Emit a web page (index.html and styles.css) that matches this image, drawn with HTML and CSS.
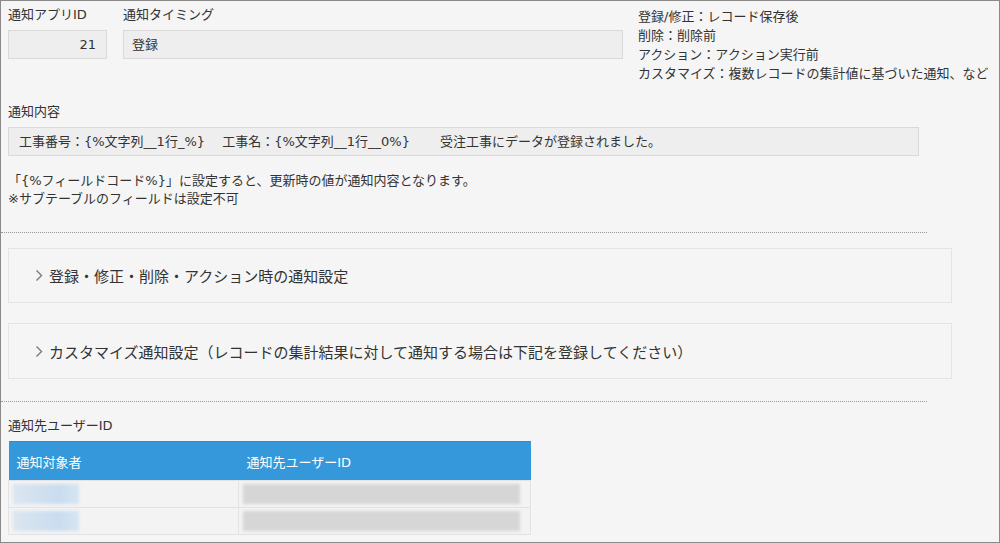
FILE: index.html
```html
<!DOCTYPE html>
<html lang="ja">
<head>
<meta charset="utf-8">
<title>通知設定</title>
<link rel="stylesheet" href="styles.css">
</head>
<body>
<div class="page">
  <div class="top-row">
    <div class="col-id">
      <div class="label">通知アプリID</div>
      <div class="field field-right">21</div>
    </div>
    <div class="col-timing">
      <div class="label">通知タイミング</div>
      <div class="field">登録</div>
    </div>
    <div class="notes">
      <div>登録/修正：レコード保存後</div>
      <div>削除：削除前</div>
      <div>アクション：アクション実行前</div>
      <div>カスタマイズ：複数レコードの集計値に基づいた通知、など</div>
    </div>
  </div>

  <div class="label">通知内容</div>
  <div class="field field-content">工事番号：{%文字列__1行_%}　 工事名：{%文字列__1行__0%}　　 受注工事にデータが登録されました。</div>

  <div class="help">
    <div>「{%フィールドコード%}」に設定すると、更新時の値が通知内容となります。</div>
    <div>※サブテーブルのフィールドは設定不可</div>
  </div>

  <div class="divider"></div>

  <div class="accordion">
    <svg class="chev" width="8" height="13" viewBox="0 0 8 13"><polyline points="1.5,1.5 6.5,6.5 1.5,11.5" fill="none" stroke="#7a7a7a" stroke-width="1.4"/></svg>
    <span>登録・修正・削除・アクション時の通知設定</span>
  </div>
  <div class="accordion acc2">
    <svg class="chev" width="8" height="13" viewBox="0 0 8 13"><polyline points="1.5,1.5 6.5,6.5 1.5,11.5" fill="none" stroke="#7a7a7a" stroke-width="1.4"/></svg>
    <span>カスタマイズ通知設定（レコードの集計結果に対して通知する場合は下記を登録してください）</span>
  </div>

  <div class="divider divider2"></div>

  <div class="label label-users">通知先ユーザーID</div>
  <table class="users">
    <thead>
      <tr><th class="c1">通知対象者</th><th class="c2">通知先ユーザーID</th></tr>
    </thead>
    <tbody>
      <tr><td><div class="blur blur-blue"></div></td><td><div class="blur blur-gray"></div></td></tr>
      <tr><td><div class="blur blur-blue"></div></td><td><div class="blur blur-gray"></div></td></tr>
    </tbody>
  </table>
</div>
</body>
</html>
```

FILE: styles.css
```css
html, body {
  margin: 0;
  padding: 0;
  background: #f5f5f5;
}
.page {
  box-sizing: border-box;
  width: 1000px;
  height: 543px;
  border: 1px solid #8a8a8a;
  padding: 5px 7px 0 7px;
  background: #f5f5f5;
  font-family: "DejaVu Sans", "Noto Sans CJK JP", sans-serif;
  font-size: 13px;
  color: #333;
  overflow: hidden;
}
.top-row {
  display: flex;
  align-items: flex-start;
  margin-bottom: 20px;
}
.col-id { width: 99px; margin-right: 16px; }
.col-timing { width: 500px; margin-right: 15px; }
.label {
  height: 18px;
  line-height: 18px;
  margin-bottom: 6px;
}
.field {
  box-sizing: border-box;
  height: 29px;
  line-height: 27px;
  border: 1px solid #d9d9d9;
  background: #eeeeee;
  padding: 0 8px;
}
.field-right { text-align: right; padding-right: 10px; }
.notes {
  line-height: 19px;
  padding-top: 1px;
  white-space: nowrap;
}
.field-content {
  width: 911px;
  padding-left: 10px;
  white-space: pre;
}
.help {
  margin-top: 16px;
  line-height: 18px;
}
.divider {
  margin: 24px 0 15px -7px;
  width: 926px;
  border-top: 1px dotted #9a9a9a;
}
.accordion {
  box-sizing: border-box;
  width: 944px;
  height: 55px;
  border: 1px solid #e1e5e8;
  display: flex;
  align-items: center;
  padding-left: 26px;
  font-family: "Noto Sans CJK JP", sans-serif;
  font-size: 15px;
  color: #333;
}
.accordion .chev { margin-right: 6px; }
.acc2 { margin-top: 20px; height: 56px; }
.divider2 { margin-top: 22px; margin-bottom: 15px; }
.label-users { margin-bottom: 6px; }
.users {
  border-collapse: collapse;
  width: 523px;
}
.users th {
  background: #3498db;
  color: #fff;
  font-weight: normal;
  text-align: left;
  height: 38px;
  padding: 0 0 0 8px;
  border-top: 1px solid #2a8fd6;
}
.users th.c1 { width: 222px; }
.users td {
  height: 27px;
  padding: 0 0 0 4px;
  border: 1px solid #e3e3e3;
  background: #f3f3f3;
  box-sizing: border-box;
}
.blur {
  height: 20px;
  filter: blur(1.5px);
}
.blur-blue {
  width: 66px;
  background: linear-gradient(90deg, #dbe6f0, #c9dcee 70%, #d6e5f2);
}
.blur-gray {
  width: 277px;
  background: #d6d6d6;
}
```
